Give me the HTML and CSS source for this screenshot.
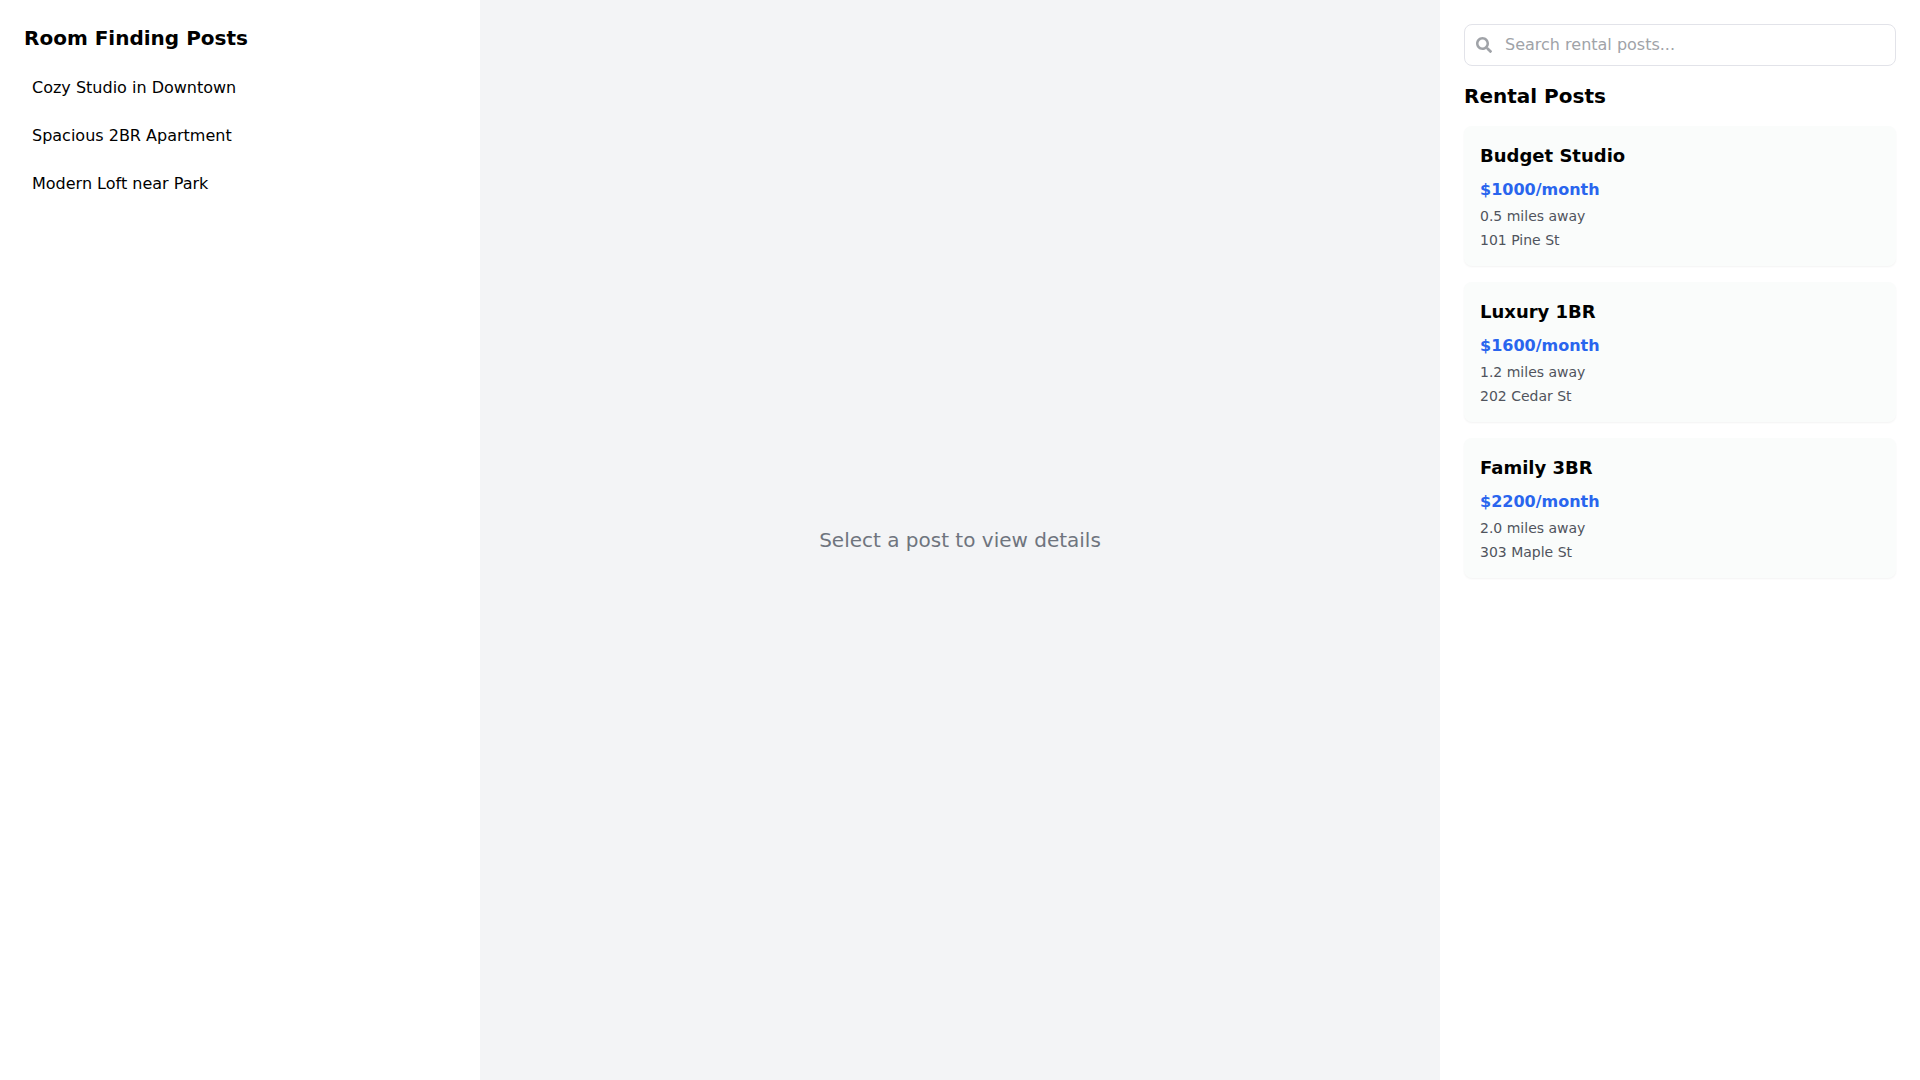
FILE: index.html
```html
<!DOCTYPE html>
<html lang="en">

<head>
  <meta charset="utf-8">
  <meta name="viewport" content="width=device-width, initial-scale=1">
  <title>Room Finder</title>
  <link rel="stylesheet" href="styles.css">
</head>

<body>
  <div class="layout">
    <aside class="panel">
      <h2 class="panel-title">Room Finding Posts</h2>
      <ul class="post-list">
        <li><button type="button" class="post-item">Cozy Studio in Downtown</button></li>
        <li><button type="button" class="post-item">Spacious 2BR Apartment</button></li>
        <li><button type="button" class="post-item">Modern Loft near Park</button></li>
      </ul>
    </aside>

    <main class="details">
      <p class="empty">Select a post to view details</p>
    </main>

    <aside class="panel">
      <div class="search">
        <label for="search" aria-label="Search rental posts">
          <svg class="search-icon" viewBox="0 0 512 512" aria-hidden="true">
            <path d="M505 442.700L405.300 343c-4.500-4.500-10.600-7-17-7H372c27.600-35.300 44-79.700 44-128C416 93.100 322.900 0 208 0S0 93.100 0 208s93.100 208 208 208c48.300 0 92.700-16.400 128-44v16.300c0 6.400 2.500 12.500 7 17l99.700 99.700c9.400 9.400 24.600 9.400 33.900 0l28.300-28.300c9.400-9.400 9.400-24.600.1-34zM208 336c-70.700 0-128-57.200-128-128 0-70.700 57.200-128 128-128 70.700 0 128 57.200 128 128 0 70.700-57.200 128-128 128z"/>
          </svg>
        </label>
        <input id="search" type="text" placeholder="Search rental posts...">
      </div>

      <h2 class="panel-title">Rental Posts</h2>
      <div class="rentals">
        <article class="card">
          <h3>Budget Studio</h3>
          <p class="price">$1000/month</p>
          <p class="meta">0.5 miles away</p>
          <p class="meta">101 Pine St</p>
        </article>
        <article class="card">
          <h3>Luxury 1BR</h3>
          <p class="price">$1600/month</p>
          <p class="meta">1.2 miles away</p>
          <p class="meta">202 Cedar St</p>
        </article>
        <article class="card">
          <h3>Family 3BR</h3>
          <p class="price">$2200/month</p>
          <p class="meta">2.0 miles away</p>
          <p class="meta">303 Maple St</p>
        </article>
      </div>
    </aside>
  </div>
</body>

</html>
```

FILE: styles.css
```css
* {
  box-sizing: border-box;
  margin: 0;
  padding: 0;
}

body {
  font-family: "DejaVu Sans", sans-serif;
  font-size: 16px;
  line-height: 24px;
  color: #000;
  background-color: #f3f4f6;
}

.layout {
  display: grid;
  grid-template-columns: 1fr 2fr 1fr;
  min-height: 100vh;
}

.panel {
  padding: 24px;
  background-color: #fff;
}

.panel-title {
  margin-bottom: 16px;
  font-size: 20px;
  line-height: 28px;
}

/* left column */
.post-list {
  display: flex;
  flex-direction: column;
  gap: 8px;
  list-style: none;
}

.post-item {
  width: 100%;
  padding: 8px;
  border: 0;
  border-radius: 4px;
  background: none;
  font: inherit;
  color: inherit;
  text-align: left;
  cursor: pointer;
}

.post-item:hover {
  background-color: #f3f4f6;
}

/* middle column */
.details {
  display: flex;
  align-items: center;
  justify-content: center;
  padding: 24px;
}

.empty {
  font-size: 20px;
  line-height: 28px;
  color: #6f747e;
}

/* right column */
.search {
  display: flex;
  align-items: center;
  gap: 13px;
  margin-bottom: 16px;
  padding: 8px 11px;
  border: 1px solid #e2e3e9;
  border-radius: 8px;
}

.search:focus-within {
  border-color: #2563eb;
}

.search-icon {
  display: block;
  width: 16px;
  height: 16px;
  fill: #a0a3a8;
}

.search input {
  flex: 1;
  min-width: 0;
  height: 24px;
  border: 0;
  outline: 0;
  background: none;
  font: inherit;
  color: inherit;
}

.search input::placeholder {
  color: #a0a3a8;
}

.rentals {
  display: flex;
  flex-direction: column;
  gap: 16px;
}

.card {
  display: flex;
  flex-direction: column;
  gap: 4px;
  padding: 16px;
  border-radius: 8px;
  background-color: #fafcfb;
  box-shadow: 0 1px 2px rgba(0, 0, 0, 0.05);
}

.card h3 {
  margin-bottom: 4px;
  font-size: 18px;
  line-height: 28px;
}

.price {
  font-weight: bold;
  color: #2965ee;
}

.meta {
  font-size: 14px;
  line-height: 20px;
  color: #50545d;
}
```
